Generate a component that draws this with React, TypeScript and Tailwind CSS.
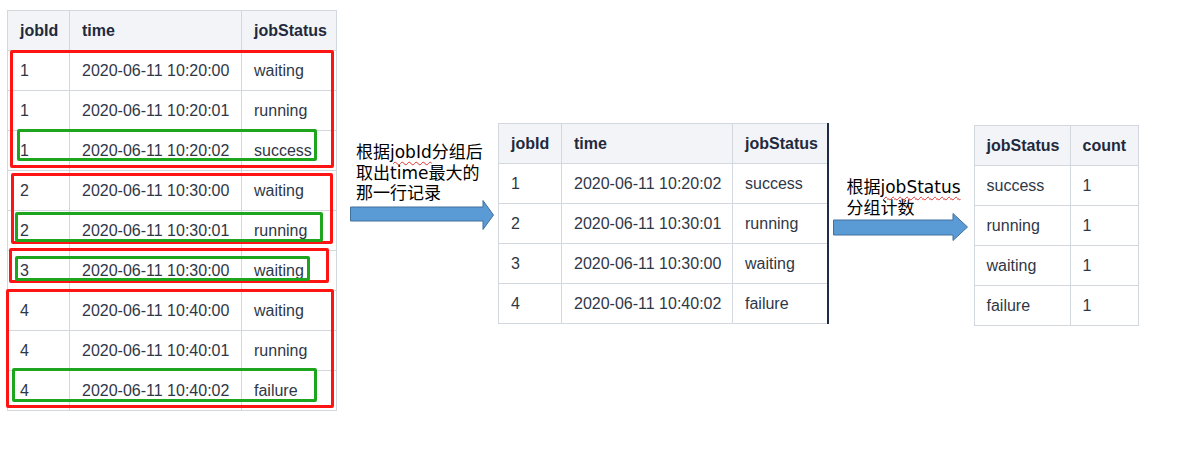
const rows1 = [
  ["1", "2020-06-11 10:20:00", "waiting"],
  ["1", "2020-06-11 10:20:01", "running"],
  ["1", "2020-06-11 10:20:02", "success"],
  ["2", "2020-06-11 10:30:00", "waiting"],
  ["2", "2020-06-11 10:30:01", "running"],
  ["3", "2020-06-11 10:30:00", "waiting"],
  ["4", "2020-06-11 10:40:00", "waiting"],
  ["4", "2020-06-11 10:40:01", "running"],
  ["4", "2020-06-11 10:40:02", "failure"],
];

const rows2 = [
  ["1", "2020-06-11 10:20:02", "success"],
  ["2", "2020-06-11 10:30:01", "running"],
  ["3", "2020-06-11 10:30:00", "waiting"],
  ["4", "2020-06-11 10:40:02", "failure"],
];

const rows3 = [
  ["success", "1"],
  ["running", "1"],
  ["waiting", "1"],
  ["failure", "1"],
];

// red = group, green = row that is kept
const boxes = [
  { c: "border-[#ff1414]", l: 10, t: 50, w: 324, h: 118 },
  { c: "border-[#1ea51e]", l: 17, t: 129, w: 300, h: 32 },
  { c: "border-[#ff1414]", l: 11, t: 173, w: 322, h: 71 },
  { c: "border-[#1ea51e]", l: 15, t: 212, w: 308, h: 30 },
  { c: "border-[#ff1414]", l: 9, t: 248, w: 320, h: 35 },
  { c: "border-[#1ea51e]", l: 15, t: 256, w: 295, h: 25 },
  { c: "border-[#ff1414]", l: 6, t: 289, w: 328, h: 119 },
  { c: "border-[#1ea51e]", l: 12, t: 368, w: 305, h: 34 },
];

function DataTable({
  head,
  rows,
  widths,
  className = "",
}: {
  head: string[];
  rows: string[][];
  widths: number[];
  className?: string;
}) {
  const total = widths.reduce((a, b) => a + b, 0);
  return (
    <table
      className={`shrink-0 border-collapse table-fixed text-[16px] font-['Liberation_Sans',Arial,sans-serif] ${className}`}
      style={{ width: total }}
    >
      <colgroup>
        {widths.map((w, i) => (
          <col key={i} style={{ width: w }} />
        ))}
      </colgroup>
      <thead>
        <tr className="h-[40px] bg-[#f3f4f7]">
          {head.map((h) => (
            <th
              key={h}
              className="border border-[#d3d8df] px-3 text-left font-bold text-[#1f2a3d] whitespace-nowrap"
            >
              {h}
            </th>
          ))}
        </tr>
      </thead>
      <tbody>
        {rows.map((r, i) => (
          <tr key={i} className="h-[40px] bg-white">
            {r.map((c, j) => (
              <td
                key={j}
                className="border border-[#d3d8df] px-3 text-[#2f3747] whitespace-nowrap"
              >
                {c}
              </td>
            ))}
          </tr>
        ))}
      </tbody>
    </table>
  );
}

function Arrow({ w, h, body, head }: { w: number; h: number; body: [number, number]; head: number }) {
  const [t, b] = body;
  return (
    <svg width={w} height={h} viewBox={`0 0 ${w} ${h}`}>
      <polygon
        points={`0.5,${t} ${head},${t} ${head},0.5 ${w - 0.5},${h / 2} ${head},${h - 0.5} ${head},${b} 0.5,${b}`}
        fill="#5b9bd5"
        stroke="#41719c"
        strokeWidth="1"
      />
    </svg>
  );
}

const noteFont =
  "font-['DejaVu_Sans','Noto_Sans_CJK_SC',sans-serif] text-[17px] leading-[20.5px] text-black";
const squiggle = "underline decoration-wavy decoration-[#e03030] decoration-1 underline-offset-[3px]";

export default function App() {
  return (
    <div className="relative w-[1183px] h-[459px] bg-white overflow-hidden">
      <div className="flex items-start">
        <DataTable
          className="ml-[7px] mt-[10px]"
          head={["jobId", "time", "jobStatus"]}
          rows={rows1}
          widths={[62, 172, 95]}
        />

        <div className="ml-[13px] mt-[142px] w-[144px] shrink-0 flex flex-col">
          <p className={`pl-[6px] whitespace-nowrap ${noteFont}`}>
            根据<span className={squiggle}>jobId</span>分组后
            <br />
            取出time最大的
            <br />
            那一行记录
          </p>
          <div className="-mt-[4px]">
            <Arrow w={144} h={30} body={[7, 21]} head={133} />
          </div>
        </div>

        <DataTable
          className="ml-[4px] mt-[123px] border-r-2 border-r-[#1f2a44]"
          head={["jobId", "time", "jobStatus"]}
          rows={rows2}
          widths={[63, 171, 95]}
        />

        <div className="ml-[4px] mt-[177px] w-[135px] shrink-0 flex flex-col">
          <p className={`pl-[14px] whitespace-nowrap ${noteFont}`}>
            根据<span className={squiggle}>jobStatus</span>
            <br />
            分组计数
          </p>
          <div className="-mt-[5px]">
            <Arrow w={135} h={28} body={[7, 22]} head={120} />
          </div>
        </div>

        <DataTable
          className="ml-[6px] mt-[125px]"
          head={["jobStatus", "count"]}
          rows={rows3}
          widths={[96, 68]}
        />
      </div>

      {boxes.map((b, i) => (
        <div
          key={i}
          className={`absolute border-[3px] rounded-[2px] ${b.c}`}
          style={{ left: b.l, top: b.t, width: b.w, height: b.h }}
        />
      ))}
    </div>
  );
}
